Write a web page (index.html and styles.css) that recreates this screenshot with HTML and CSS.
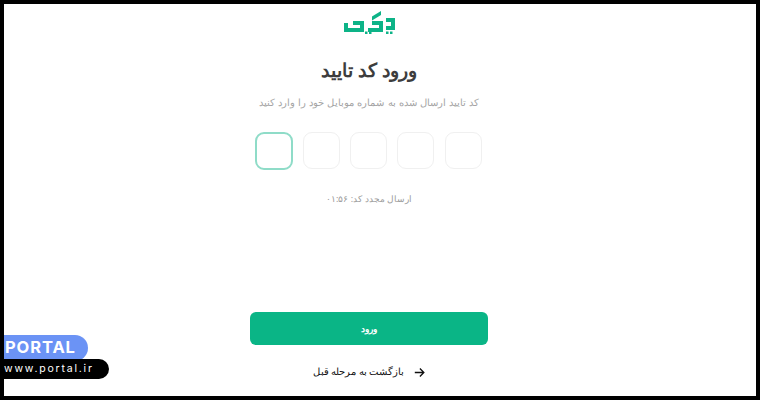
FILE: index.html
```html
<!DOCTYPE html>
<html lang="fa" dir="rtl">
<head>
    <meta charset="UTF-8">
    <title>ورود کد تایید</title>
    <link rel="stylesheet" href="styles.css">
</head>
<body>
    <div class="frame">
        <main class="login">
            <svg class="logo" width="51" height="23" viewBox="0 0 51 23" aria-label="logo">
                <g fill="#0db387">
                    <path d="M0 12h4v5h12v-3H9v-4h11v11H0z"/>
                    <path d="M24 17h11v-3h-7v-4h11v11H24z"/>
                    <path d="M28 5.500L37 0v4l-9 5.500z"/>
                    <path d="M42 7h9v12h-9v-4h5v-4h-5z"/>
                    <rect x="21" y="20.500" width="2.500" height="2.500"/>
                    <rect x="25" y="20.500" width="2.500" height="2.500"/>
                    <rect x="42" y="20.500" width="2.500" height="2.500"/>
                    <rect x="46" y="20.500" width="2.500" height="2.500"/>
                </g>
            </svg>
            <h1 class="title">ورود کد تایید</h1>
            <p class="subtitle">کد تایید ارسال شده به شماره موبایل خود را وارد کنید</p>
            <div class="code-row" dir="ltr">
                <div class="code-box active"></div>
                <div class="code-box"></div>
                <div class="code-box"></div>
                <div class="code-box"></div>
                <div class="code-box"></div>
            </div>
            <p class="resend">ارسال مجدد کد: ۰۱:۵۶</p>
            <button class="button-primary" type="button">ورود</button>
            <a class="back-link" href="#">
                <svg width="11" height="11" viewBox="0 0 14 14" fill="none" stroke="#111" stroke-width="1.700">
                    <path d="M1 7h11.500M7.500 2l5 5-5 5"/>
                </svg>
                <span>بازگشت به مرحله قبل</span>
            </a>
        </main>
        <div class="badge" dir="ltr">
            <div class="badge-name">PORTAL</div>
            <div class="badge-url">www.portal.ir</div>
        </div>
    </div>
</body>
</html>
```

FILE: styles.css
```css
html, body {
    margin: 0;
    height: 100%;
}
body {
    font-family: "Noto Sans", "Open Sans", sans-serif;
    background-color: #000;
}
.frame {
    position: relative;
    box-sizing: border-box;
    width: 760px;
    height: 400px;
    background: #fff;
    border: 4px solid #000;
    overflow: hidden;
}
.login {
    display: flex;
    flex-direction: column;
    align-items: center;
    padding-top: 7px;
    padding-right: 22px;
}
.logo {
    display: block;
}
.title {
    margin: 21px 0 0;
    font-size: 18.500px;
    line-height: 30px;
    font-weight: 700;
    color: #3d3d3d;
}
.subtitle {
    margin: 7px 0 0;
    font-size: 10px;
    line-height: 20px;
    word-spacing: 0.6px;
    color: #a4a4a4;
}
.code-row {
    display: flex;
    gap: 10.250px;
    margin: 20px 2px 0 0;
}
.code-box {
    box-sizing: border-box;
    width: 37px;
    height: 37px;
    border: 1px solid #f0f0f0;
    border-radius: 9px;
}
.code-box.active {
    width: 38px;
    height: 38px;
    border: 2px solid #8fdcc8;
}
.resend {
    margin: 19px 0 0;
    font-size: 9px;
    line-height: 20px;
    color: #9b9b9b;
}
.button-primary {
    width: 238px;
    height: 33px;
    margin-top: 103px;
    border: none;
    border-radius: 6px;
    background-color: #0ab586;
    color: #fff;
    font-family: inherit;
    font-size: 9px;
    font-weight: 700;
    cursor: pointer;
}
.back-link {
    display: flex;
    align-items: center;
    gap: 10px;
    margin-top: 17px;
    font-size: 9.500px;
    line-height: 20px;
    color: #111;
    text-decoration: none;
}
.badge {
    position: absolute;
    left: -4px;
    top: 331px;
}
.badge-name {
    box-sizing: border-box;
    width: 88px;
    height: 26px;
    padding-left: 5px;
    background: #6b93f5;
    border-radius: 0 13px 13px 0;
    color: #fff;
    font-family: "Inter", sans-serif;
    font-size: 16.500px;
    line-height: 25px;
    font-weight: 700;
    letter-spacing: 0.9px;
}
.badge-url {
    box-sizing: border-box;
    width: 109px;
    height: 20px;
    margin-top: -2px;
    padding-left: 4px;
    background: #000;
    border-radius: 0 10px 10px 0;
    color: #fff;
    font-family: "Inter", sans-serif;
    font-size: 10.500px;
    line-height: 20px;
    letter-spacing: 1.800px;
}
```
